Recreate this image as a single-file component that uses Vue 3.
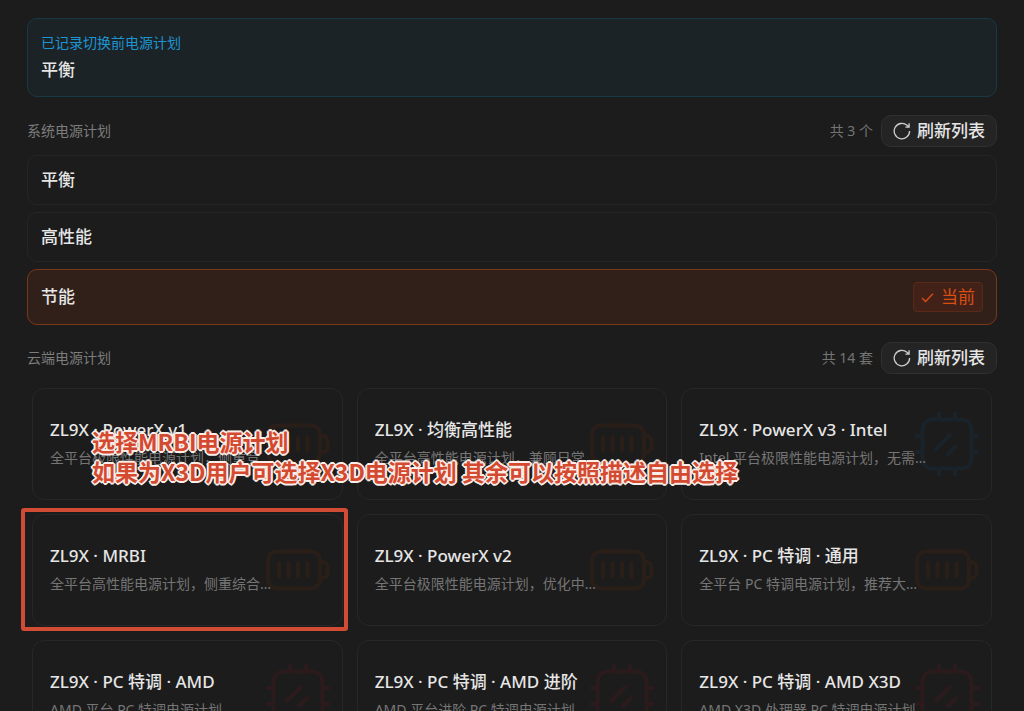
<script setup>
import { ref } from 'vue'

const systemPlans = ref([
  { name: '平衡', current: false },
  { name: '高性能', current: false },
  { name: '节能', current: true },
])

const cloudPlans = ref([
  { name: 'ZL9X · PowerX v1', desc: '全平台极限性能电源计划，侧重竞技游戏表现', icon: 'battery' },
  { name: 'ZL9X · 均衡高性能', desc: '全平台高性能电源计划，兼顾日常与游戏使用', icon: 'battery' },
  { name: 'ZL9X · PowerX v3 · Intel', desc: 'Intel 平台极限性能电源计划，无需额外设置', icon: 'chip', tone: 'intel' },
  { name: 'ZL9X · MRBI', desc: '全平台高性能电源计划，侧重综合性能表现', icon: 'battery', picked: true },
  { name: 'ZL9X · PowerX v2', desc: '全平台极限性能电源计划，优化中断与调度', icon: 'battery' },
  { name: 'ZL9X · PC 特调 · 通用', desc: '全平台 PC 特调电源计划，推荐大多数用户', icon: 'battery' },
  { name: 'ZL9X · PC 特调 · AMD', desc: 'AMD 平台 PC 特调电源计划', icon: 'chip', tone: 'amd' },
  { name: 'ZL9X · PC 特调 · AMD 进阶', desc: 'AMD 平台进阶 PC 特调电源计划', icon: 'chip', tone: 'amd' },
  { name: 'ZL9X · PC 特调 · AMD X3D', desc: 'AMD X3D 处理器 PC 特调电源计划', icon: 'chip', tone: 'amd' },
])
</script>

<template>
  <main class="page">
    <section class="recorded">
      <p class="recorded-label">已记录切换前电源计划</p>
      <p class="plan-name">平衡</p>
    </section>

    <section>
      <header class="section-head">
        <h2>系统电源计划</h2>
        <span class="count">共 3 个</span>
        <button type="button" class="refresh">
          <svg viewBox="0 0 18 18" aria-hidden="true">
            <path d="M16.6 9a7.7 7.7 0 1 1-2.6-5.7L16 5.1M16.1 1.3V5.2H12.4" />
          </svg>
          刷新列表
        </button>
      </header>
      <ul class="system-list">
        <li v-for="plan in systemPlans" :key="plan.name" :class="{ current: plan.current }">
          <span class="plan-name">{{ plan.name }}</span>
          <span v-if="plan.current" class="tag">
            <svg viewBox="0 0 12 12" aria-hidden="true"><path d="M1 6.5 4.2 9.7 11 2.5" /></svg>
            当前
          </span>
        </li>
      </ul>
    </section>

    <section class="cloud">
      <header class="section-head">
        <h2>云端电源计划</h2>
        <span class="count">共 14 套</span>
        <button type="button" class="refresh">
          <svg viewBox="0 0 18 18" aria-hidden="true">
            <path d="M16.6 9a7.7 7.7 0 1 1-2.6-5.7L16 5.1M16.1 1.3V5.2H12.4" />
          </svg>
          刷新列表
        </button>
      </header>
      <div class="cloud-area">
        <ul class="cloud-grid">
          <li v-for="plan in cloudPlans" :key="plan.name" class="card" :class="{ picked: plan.picked }">
            <svg v-if="plan.icon === 'battery'" class="card-icon" viewBox="0 0 66 66" aria-hidden="true">
              <rect x="3" y="14.5" width="52" height="37" rx="9" />
              <path d="M56 25h1.500a5 5 0 0 1 5 5v6a5 5 0 0 1-5 5H56M14 26v14M23.500 26v14M33 26v14M42.500 26v14" />
            </svg>
            <svg v-else class="card-icon" :class="plan.tone" viewBox="0 0 66 66" aria-hidden="true">
              <rect x="8.500" y="8.500" width="49" height="49" rx="10" />
              <path d="M25 8V2.500M41 8V2.500M25 58v5.500M41 58v5.500M8 25H2.500M8 41H2.500M58 25h5.500M58 41h5.500M22 38 36 24M34 43 42 35" />
            </svg>
            <h3>{{ plan.name }}</h3>
            <p>{{ plan.desc }}</p>
          </li>
        </ul>
        <p class="note">选择MRBI电源计划<br>如果为X3D用户可选择X3D电源计划 其余可以按照描述自由选择</p>
      </div>
    </section>
  </main>
</template>

<style>
html,
body {
  background: #1c1c1c;
  overflow: hidden;
}
</style>

<style scoped>
.page {
  box-sizing: border-box;
  height: 100vh;
  overflow: hidden;
  padding: 18px 27px 0;
  background: #1c1c1c;
  color: #e6e6e6;
  font-family: "Noto Sans", "Noto Sans CJK SC", sans-serif;
  font-size: 14px;
  line-height: 20px;
}
p, h2, h3, ul {
  margin: 0;
  padding: 0;
  font-weight: 400;
}
ul {
  list-style: none;
}
.recorded {
  padding: 14px 13px 12px;
  border: 1px solid #183a45;
  border-radius: 10px;
  background: #1c2327;
}
.recorded-label {
  color: #1d95d2;
}
.plan-name {
  font-size: 17px;
  line-height: 28px;
  font-weight: 500;
}
.recorded .plan-name {
  margin-top: 3px;
}
.section-head {
  display: flex;
  align-items: center;
  margin-top: 18px;
}
.cloud .section-head {
  margin-top: 17px;
}
.section-head h2 {
  flex: 1;
  font-size: 14px;
  color: #7d7d7d;
}
.count {
  color: #747474;
  margin-right: 8px;
}
.refresh {
  display: flex;
  align-items: center;
  gap: 6px;
  height: 32px;
  padding: 0 11px;
  border: 1px solid #303030;
  border-radius: 10px;
  background: #242424;
  color: #e6e6e6;
  font: inherit;
  font-size: 17px;
  font-weight: 500;
}
.refresh svg {
  width: 18px;
  height: 18px;
  fill: none;
  stroke: #cfcfcf;
  stroke-width: 1.3;
}
.system-list {
  display: grid;
  gap: 7px;
  margin-top: 8px;
}
.system-list li {
  display: flex;
  align-items: center;
  justify-content: space-between;
  padding: 10px 13px;
  border: 1px solid #252525;
  border-radius: 10px;
}
.system-list li.current {
  padding: 12px 13px;
  border-color: #7c3618;
  background: #31201a;
}
.tag {
  display: flex;
  align-items: center;
  gap: 7px;
  padding: 4px 7px;
  border: 1px solid #5a2a19;
  border-radius: 4px;
  background: #422218;
  color: #da4e14;
  font-size: 17px;
  line-height: 20px;
}
.tag svg {
  width: 13px;
  height: 13px;
  fill: none;
  stroke: currentColor;
  stroke-width: 1.2;
}
.cloud-area {
  position: relative;
  padding: 14px 5px 0;
}
.cloud-grid {
  display: grid;
  grid-template-columns: repeat(3, minmax(0, 1fr));
  gap: 14px;
}
.card {
  position: relative;
  padding: 27px 62px 27px 17px;
  border: 1px solid #272727;
  border-radius: 12px;
}
.card h3 {
  font-size: 17px;
  line-height: 28px;
  font-weight: 500;
  white-space: nowrap;
}
.card p {
  position: relative;
  line-height: 28px;
  color: #757575;
  overflow: hidden;
  text-overflow: ellipsis;
  white-space: nowrap;
}
.card-icon {
  position: absolute;
  right: 11px;
  top: 50%;
  width: 66px;
  height: 66px;
  margin-top: -33px;
  fill: none;
  stroke: #2a1e19;
  stroke-width: 4;
  stroke-linecap: round;
}
.card-icon.intel {
  stroke: #1a232a;
}
.card-icon.amd {
  stroke: #2b1b1d;
}
.card.picked::after {
  content: "";
  position: absolute;
  inset: -7px -6px -6px -12px;
  border: 4px solid #d24b34;
  border-radius: 3px;
}
.note {
  position: absolute;
  left: 65px;
  top: 52px;
  color: #d44a30;
  font-family: "Noto Sans CJK SC", sans-serif;
  font-size: 23px;
  font-weight: 700;
  line-height: 30px;
  white-space: nowrap;
  text-shadow:
    2px 0 0 #fbeee9, -2px 0 0 #fbeee9, 0 2px 0 #fbeee9, 0 -2px 0 #fbeee9,
    1px 1px 0 #fbeee9, -1px -1px 0 #fbeee9, 1px -1px 0 #fbeee9, -1px 1px 0 #fbeee9;
}
</style>
